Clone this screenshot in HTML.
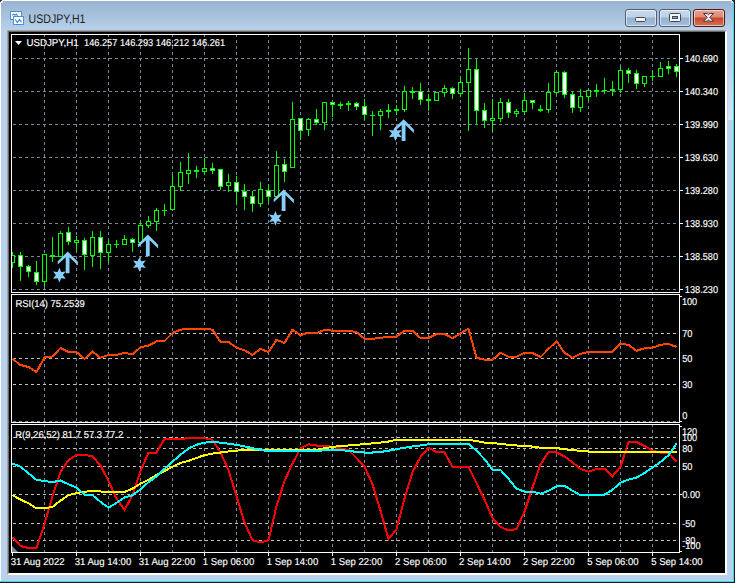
<!DOCTYPE html>
<html><head><meta charset="utf-8">
<style>
html,body{margin:0;padding:0;background:#fff;}
body{width:737px;height:583px;overflow:hidden;position:relative;font-family:"Liberation Sans",sans-serif;}
#win{position:absolute;left:0;top:0;width:735px;height:583px;}
#frame{position:absolute;left:1px;top:1px;width:733px;height:581px;
  background:linear-gradient(#98b4d2 0px,#a9c3df 16px,#b9d1ea 29px,#b9d1ea 100%);
  }
#redge{position:absolute;left:733px;top:3px;width:1px;height:578px;background:#3ad7f5;}
#redge2{position:absolute;left:734px;top:2px;width:1px;height:581px;background:#1a1a1a;}
#bedge{position:absolute;left:0;top:581px;width:734px;height:1px;background:#3ad7f5;}
#bedge2{position:absolute;left:0;top:582px;width:735px;height:1px;background:#1a1a1a;}
#client{position:absolute;left:7px;top:30px;width:720px;height:545px;background:#000;
  box-sizing:border-box;border-style:solid;border-width:2px;border-color:#a0a0a0 #fff #fff #a0a0a0;}
#client2{position:absolute;left:8px;top:31px;width:717px;height:542px;box-sizing:border-box;border-style:solid;border-width:1px 0 0 1px;border-color:#696969;}
#title{position:absolute;left:29px;top:9px;font-size:12px;color:#1e1e1e;letter-spacing:-0.9px;line-height:16px;}
.btn{position:absolute;top:9px;height:18px;box-sizing:border-box;border:1px solid #4f5f74;border-radius:3px;
  background:linear-gradient(#c8daec 0px,#bcd0e6 7px,#97b1cf 8px,#a6bfdb 16px);box-shadow:inset 0 0 0 1px rgba(255,255,255,0.55);}
#bclose{border-color:#4a1a1a;background:linear-gradient(#e9a08c 0px,#dd8a74 7px,#c8452a 8px,#d27258 16px);}
.lb{position:absolute;font-size:10px;line-height:10px;color:#fff;white-space:nowrap;transform:translateY(-5px);letter-spacing:-0.5px;}
.tm{letter-spacing:-0.38px;}
.hd{position:absolute;font-size:10px;line-height:10px;color:#fff;white-space:nowrap;letter-spacing:-0.3px;}
svg{position:absolute;left:0;top:0;}
</style></head><body>
<div id="win">
<div id="frame"></div>
<div id="redge"></div><div id="redge2"></div>
<div id="bedge"></div><div id="bedge2"></div>
<div style="position:absolute;left:0;top:0;width:2px;height:2px;background:#2a2a2a;border-radius:0 0 2px 0"></div>
<div style="position:absolute;left:1px;top:1px;width:2px;height:2px;background:#d8e6f2;"></div>
<div style="position:absolute;left:732px;top:0;width:3px;height:2px;background:#2a2a2a;"></div>
<div style="position:absolute;left:731px;top:1px;width:2px;height:2px;background:#bfe9f7;"></div>
<div style="position:absolute;left:728px;top:60px;width:5px;height:60px;background:linear-gradient(rgba(255,255,255,0),rgba(255,255,255,0.4));"></div>
<div id="client"></div>
<div id="client2"></div>
</div>
<svg width="737" height="583" viewBox="0 0 737 583">
<rect x="9" y="32" width="716" height="541" fill="#000"/>
<line x1="13" y1="58.5" x2="679" y2="58.5" stroke="#778899" stroke-width="1" stroke-dasharray="3 3"/>
<line x1="13" y1="91.5" x2="679" y2="91.5" stroke="#778899" stroke-width="1" stroke-dasharray="3 3"/>
<line x1="13" y1="124.5" x2="679" y2="124.5" stroke="#778899" stroke-width="1" stroke-dasharray="3 3"/>
<line x1="13" y1="157.5" x2="679" y2="157.5" stroke="#778899" stroke-width="1" stroke-dasharray="3 3"/>
<line x1="13" y1="190.5" x2="679" y2="190.5" stroke="#778899" stroke-width="1" stroke-dasharray="3 3"/>
<line x1="13" y1="223.5" x2="679" y2="223.5" stroke="#778899" stroke-width="1" stroke-dasharray="3 3"/>
<line x1="13" y1="256.5" x2="679" y2="256.5" stroke="#778899" stroke-width="1" stroke-dasharray="3 3"/>
<line x1="13" y1="289.5" x2="679" y2="289.5" stroke="#778899" stroke-width="1" stroke-dasharray="3 3"/>
<line x1="44.5" y1="34" x2="44.5" y2="292" stroke="#778899" stroke-width="1" stroke-dasharray="3 3"/>
<line x1="76.5" y1="34" x2="76.5" y2="292" stroke="#778899" stroke-width="1" stroke-dasharray="3 3"/>
<line x1="108.5" y1="34" x2="108.5" y2="292" stroke="#778899" stroke-width="1" stroke-dasharray="3 3"/>
<line x1="140.5" y1="34" x2="140.5" y2="292" stroke="#778899" stroke-width="1" stroke-dasharray="3 3"/>
<line x1="172.5" y1="34" x2="172.5" y2="292" stroke="#778899" stroke-width="1" stroke-dasharray="3 3"/>
<line x1="204.5" y1="34" x2="204.5" y2="292" stroke="#778899" stroke-width="1" stroke-dasharray="3 3"/>
<line x1="236.5" y1="34" x2="236.5" y2="292" stroke="#778899" stroke-width="1" stroke-dasharray="3 3"/>
<line x1="268.5" y1="34" x2="268.5" y2="292" stroke="#778899" stroke-width="1" stroke-dasharray="3 3"/>
<line x1="300.5" y1="34" x2="300.5" y2="292" stroke="#778899" stroke-width="1" stroke-dasharray="3 3"/>
<line x1="332.5" y1="34" x2="332.5" y2="292" stroke="#778899" stroke-width="1" stroke-dasharray="3 3"/>
<line x1="364.5" y1="34" x2="364.5" y2="292" stroke="#778899" stroke-width="1" stroke-dasharray="3 3"/>
<line x1="396.5" y1="34" x2="396.5" y2="292" stroke="#778899" stroke-width="1" stroke-dasharray="3 3"/>
<line x1="428.5" y1="34" x2="428.5" y2="292" stroke="#778899" stroke-width="1" stroke-dasharray="3 3"/>
<line x1="460.5" y1="34" x2="460.5" y2="292" stroke="#778899" stroke-width="1" stroke-dasharray="3 3"/>
<line x1="492.5" y1="34" x2="492.5" y2="292" stroke="#778899" stroke-width="1" stroke-dasharray="3 3"/>
<line x1="524.5" y1="34" x2="524.5" y2="292" stroke="#778899" stroke-width="1" stroke-dasharray="3 3"/>
<line x1="556.5" y1="34" x2="556.5" y2="292" stroke="#778899" stroke-width="1" stroke-dasharray="3 3"/>
<line x1="588.5" y1="34" x2="588.5" y2="292" stroke="#778899" stroke-width="1" stroke-dasharray="3 3"/>
<line x1="620.5" y1="34" x2="620.5" y2="292" stroke="#778899" stroke-width="1" stroke-dasharray="3 3"/>
<line x1="652.5" y1="34" x2="652.5" y2="292" stroke="#778899" stroke-width="1" stroke-dasharray="3 3"/>
<line x1="44.5" y1="292" x2="44.5" y2="422" stroke="#778899" stroke-width="1" stroke-dasharray="3 3"/>
<line x1="76.5" y1="292" x2="76.5" y2="422" stroke="#778899" stroke-width="1" stroke-dasharray="3 3"/>
<line x1="108.5" y1="292" x2="108.5" y2="422" stroke="#778899" stroke-width="1" stroke-dasharray="3 3"/>
<line x1="140.5" y1="292" x2="140.5" y2="422" stroke="#778899" stroke-width="1" stroke-dasharray="3 3"/>
<line x1="172.5" y1="292" x2="172.5" y2="422" stroke="#778899" stroke-width="1" stroke-dasharray="3 3"/>
<line x1="204.5" y1="292" x2="204.5" y2="422" stroke="#778899" stroke-width="1" stroke-dasharray="3 3"/>
<line x1="236.5" y1="292" x2="236.5" y2="422" stroke="#778899" stroke-width="1" stroke-dasharray="3 3"/>
<line x1="268.5" y1="292" x2="268.5" y2="422" stroke="#778899" stroke-width="1" stroke-dasharray="3 3"/>
<line x1="300.5" y1="292" x2="300.5" y2="422" stroke="#778899" stroke-width="1" stroke-dasharray="3 3"/>
<line x1="332.5" y1="292" x2="332.5" y2="422" stroke="#778899" stroke-width="1" stroke-dasharray="3 3"/>
<line x1="364.5" y1="292" x2="364.5" y2="422" stroke="#778899" stroke-width="1" stroke-dasharray="3 3"/>
<line x1="396.5" y1="292" x2="396.5" y2="422" stroke="#778899" stroke-width="1" stroke-dasharray="3 3"/>
<line x1="428.5" y1="292" x2="428.5" y2="422" stroke="#778899" stroke-width="1" stroke-dasharray="3 3"/>
<line x1="460.5" y1="292" x2="460.5" y2="422" stroke="#778899" stroke-width="1" stroke-dasharray="3 3"/>
<line x1="492.5" y1="292" x2="492.5" y2="422" stroke="#778899" stroke-width="1" stroke-dasharray="3 3"/>
<line x1="524.5" y1="292" x2="524.5" y2="422" stroke="#778899" stroke-width="1" stroke-dasharray="3 3"/>
<line x1="556.5" y1="292" x2="556.5" y2="422" stroke="#778899" stroke-width="1" stroke-dasharray="3 3"/>
<line x1="588.5" y1="292" x2="588.5" y2="422" stroke="#778899" stroke-width="1" stroke-dasharray="3 3"/>
<line x1="620.5" y1="292" x2="620.5" y2="422" stroke="#778899" stroke-width="1" stroke-dasharray="3 3"/>
<line x1="652.5" y1="292" x2="652.5" y2="422" stroke="#778899" stroke-width="1" stroke-dasharray="3 3"/>
<line x1="13" y1="421.5" x2="679" y2="421.5" stroke="#778899" stroke-width="1" stroke-dasharray="3 3"/>
<line x1="13" y1="333.5" x2="679" y2="333.5" stroke="#c0c0c0" stroke-width="1" stroke-dasharray="3 3"/>
<line x1="13" y1="358.5" x2="679" y2="358.5" stroke="#c0c0c0" stroke-width="1" stroke-dasharray="3 3"/>
<line x1="13" y1="384.5" x2="679" y2="384.5" stroke="#c0c0c0" stroke-width="1" stroke-dasharray="3 3"/>
<line x1="44.5" y1="424" x2="44.5" y2="552" stroke="#778899" stroke-width="1" stroke-dasharray="3 3"/>
<line x1="76.5" y1="424" x2="76.5" y2="552" stroke="#778899" stroke-width="1" stroke-dasharray="3 3"/>
<line x1="108.5" y1="424" x2="108.5" y2="552" stroke="#778899" stroke-width="1" stroke-dasharray="3 3"/>
<line x1="140.5" y1="424" x2="140.5" y2="552" stroke="#778899" stroke-width="1" stroke-dasharray="3 3"/>
<line x1="172.5" y1="424" x2="172.5" y2="552" stroke="#778899" stroke-width="1" stroke-dasharray="3 3"/>
<line x1="204.5" y1="424" x2="204.5" y2="552" stroke="#778899" stroke-width="1" stroke-dasharray="3 3"/>
<line x1="236.5" y1="424" x2="236.5" y2="552" stroke="#778899" stroke-width="1" stroke-dasharray="3 3"/>
<line x1="268.5" y1="424" x2="268.5" y2="552" stroke="#778899" stroke-width="1" stroke-dasharray="3 3"/>
<line x1="300.5" y1="424" x2="300.5" y2="552" stroke="#778899" stroke-width="1" stroke-dasharray="3 3"/>
<line x1="332.5" y1="424" x2="332.5" y2="552" stroke="#778899" stroke-width="1" stroke-dasharray="3 3"/>
<line x1="364.5" y1="424" x2="364.5" y2="552" stroke="#778899" stroke-width="1" stroke-dasharray="3 3"/>
<line x1="396.5" y1="424" x2="396.5" y2="552" stroke="#778899" stroke-width="1" stroke-dasharray="3 3"/>
<line x1="428.5" y1="424" x2="428.5" y2="552" stroke="#778899" stroke-width="1" stroke-dasharray="3 3"/>
<line x1="460.5" y1="424" x2="460.5" y2="552" stroke="#778899" stroke-width="1" stroke-dasharray="3 3"/>
<line x1="492.5" y1="424" x2="492.5" y2="552" stroke="#778899" stroke-width="1" stroke-dasharray="3 3"/>
<line x1="524.5" y1="424" x2="524.5" y2="552" stroke="#778899" stroke-width="1" stroke-dasharray="3 3"/>
<line x1="556.5" y1="424" x2="556.5" y2="552" stroke="#778899" stroke-width="1" stroke-dasharray="3 3"/>
<line x1="588.5" y1="424" x2="588.5" y2="552" stroke="#778899" stroke-width="1" stroke-dasharray="3 3"/>
<line x1="620.5" y1="424" x2="620.5" y2="552" stroke="#778899" stroke-width="1" stroke-dasharray="3 3"/>
<line x1="652.5" y1="424" x2="652.5" y2="552" stroke="#778899" stroke-width="1" stroke-dasharray="3 3"/>
<line x1="13" y1="437.5" x2="679" y2="437.5" stroke="#c0c0c0" stroke-width="1" stroke-dasharray="3 3"/>
<line x1="13" y1="448.5" x2="679" y2="448.5" stroke="#c0c0c0" stroke-width="1" stroke-dasharray="3 3"/>
<line x1="13" y1="466.5" x2="679" y2="466.5" stroke="#c0c0c0" stroke-width="1" stroke-dasharray="3 3"/>
<line x1="13" y1="494.5" x2="679" y2="494.5" stroke="#c0c0c0" stroke-width="1" stroke-dasharray="3 3"/>
<line x1="13" y1="523.5" x2="679" y2="523.5" stroke="#c0c0c0" stroke-width="1" stroke-dasharray="3 3"/>
<line x1="13" y1="540.5" x2="679" y2="540.5" stroke="#c0c0c0" stroke-width="1" stroke-dasharray="3 3"/>
<rect x="11.5" y="34.5" width="668" height="258" fill="none" stroke="#fff" stroke-width="1"/>
<rect x="11.5" y="294.5" width="668" height="128" fill="none" stroke="#fff" stroke-width="1"/>
<rect x="11.5" y="424.5" width="668" height="128" fill="none" stroke="#fff" stroke-width="1"/>
<defs>
<clipPath id="cp0"><rect x="12" y="35" width="667" height="257"/></clipPath>
<clipPath id="cp1"><rect x="12" y="295" width="667" height="127"/></clipPath>
<clipPath id="cp2"><rect x="12" y="425" width="667" height="127"/></clipPath>
</defs>
<g clip-path="url(#cp0)" shape-rendering="crispEdges">
<rect x="12" y="252" width="1" height="16" fill="#00ff00"/>
<rect x="10" y="255" width="5" height="8" fill="#00ff00"/>
<rect x="11" y="256" width="3" height="6" fill="#000"/>
<rect x="20" y="252" width="1" height="29" fill="#00ff00"/>
<rect x="18" y="255" width="5" height="12" fill="#00ff00"/>
<rect x="19" y="256" width="3" height="10" fill="#fff"/>
<rect x="28" y="265" width="1" height="12" fill="#00ff00"/>
<rect x="26" y="266" width="5" height="6" fill="#00ff00"/>
<rect x="27" y="267" width="3" height="4" fill="#fff"/>
<rect x="36" y="261" width="1" height="24" fill="#00ff00"/>
<rect x="34" y="272" width="5" height="10" fill="#00ff00"/>
<rect x="35" y="273" width="3" height="8" fill="#fff"/>
<rect x="44" y="254" width="1" height="32" fill="#00ff00"/>
<rect x="42" y="254" width="5" height="28" fill="#00ff00"/>
<rect x="43" y="255" width="3" height="26" fill="#000"/>
<rect x="52" y="237" width="1" height="25" fill="#00ff00"/>
<rect x="50" y="255" width="5" height="2" fill="#00ff00"/>
<rect x="60" y="231" width="1" height="26" fill="#00ff00"/>
<rect x="58" y="233" width="5" height="24" fill="#00ff00"/>
<rect x="59" y="234" width="3" height="22" fill="#000"/>
<rect x="68" y="227" width="1" height="18" fill="#00ff00"/>
<rect x="66" y="232" width="5" height="10" fill="#00ff00"/>
<rect x="67" y="233" width="3" height="8" fill="#fff"/>
<rect x="76" y="236" width="1" height="15" fill="#00ff00"/>
<rect x="74" y="240" width="5" height="3" fill="#00ff00"/>
<rect x="75" y="241" width="3" height="1" fill="#000"/>
<rect x="84" y="238" width="1" height="32" fill="#00ff00"/>
<rect x="82" y="240" width="5" height="15" fill="#00ff00"/>
<rect x="83" y="241" width="3" height="13" fill="#fff"/>
<rect x="92" y="231" width="1" height="36" fill="#00ff00"/>
<rect x="90" y="237" width="5" height="19" fill="#00ff00"/>
<rect x="91" y="238" width="3" height="17" fill="#000"/>
<rect x="100" y="231" width="1" height="38" fill="#00ff00"/>
<rect x="98" y="237" width="5" height="16" fill="#00ff00"/>
<rect x="99" y="238" width="3" height="14" fill="#fff"/>
<rect x="108" y="241" width="1" height="21" fill="#00ff00"/>
<rect x="106" y="244" width="5" height="9" fill="#00ff00"/>
<rect x="107" y="245" width="3" height="7" fill="#000"/>
<rect x="116" y="240" width="1" height="8" fill="#00ff00"/>
<rect x="114" y="244" width="5" height="1" fill="#00ff00"/>
<rect x="124" y="235" width="1" height="10" fill="#00ff00"/>
<rect x="122" y="239" width="5" height="6" fill="#00ff00"/>
<rect x="123" y="240" width="3" height="4" fill="#000"/>
<rect x="132" y="238" width="1" height="14" fill="#00ff00"/>
<rect x="130" y="239" width="5" height="4" fill="#00ff00"/>
<rect x="131" y="240" width="3" height="2" fill="#fff"/>
<rect x="140" y="221" width="1" height="22" fill="#00ff00"/>
<rect x="138" y="225" width="5" height="18" fill="#00ff00"/>
<rect x="139" y="226" width="3" height="16" fill="#000"/>
<rect x="148" y="216" width="1" height="12" fill="#00ff00"/>
<rect x="146" y="221" width="5" height="5" fill="#00ff00"/>
<rect x="147" y="222" width="3" height="3" fill="#000"/>
<rect x="156" y="208" width="1" height="23" fill="#00ff00"/>
<rect x="154" y="210" width="5" height="12" fill="#00ff00"/>
<rect x="155" y="211" width="3" height="10" fill="#000"/>
<rect x="164" y="204" width="1" height="12" fill="#00ff00"/>
<rect x="162" y="210" width="5" height="1" fill="#00ff00"/>
<rect x="172" y="175" width="1" height="35" fill="#00ff00"/>
<rect x="170" y="186" width="5" height="24" fill="#00ff00"/>
<rect x="171" y="187" width="3" height="22" fill="#000"/>
<rect x="180" y="162" width="1" height="29" fill="#00ff00"/>
<rect x="178" y="172" width="5" height="15" fill="#00ff00"/>
<rect x="179" y="173" width="3" height="13" fill="#000"/>
<rect x="188" y="153" width="1" height="31" fill="#00ff00"/>
<rect x="186" y="170" width="5" height="4" fill="#00ff00"/>
<rect x="187" y="171" width="3" height="2" fill="#000"/>
<rect x="196" y="166" width="1" height="12" fill="#00ff00"/>
<rect x="194" y="170" width="5" height="2" fill="#00ff00"/>
<rect x="204" y="158" width="1" height="17" fill="#00ff00"/>
<rect x="202" y="168" width="5" height="4" fill="#00ff00"/>
<rect x="203" y="169" width="3" height="2" fill="#000"/>
<rect x="212" y="163" width="1" height="11" fill="#00ff00"/>
<rect x="210" y="168" width="5" height="3" fill="#00ff00"/>
<rect x="211" y="169" width="3" height="1" fill="#fff"/>
<rect x="220" y="169" width="1" height="21" fill="#00ff00"/>
<rect x="218" y="169" width="5" height="18" fill="#00ff00"/>
<rect x="219" y="170" width="3" height="16" fill="#fff"/>
<rect x="228" y="174" width="1" height="18" fill="#00ff00"/>
<rect x="226" y="182" width="5" height="4" fill="#00ff00"/>
<rect x="227" y="183" width="3" height="2" fill="#000"/>
<rect x="236" y="176" width="1" height="29" fill="#00ff00"/>
<rect x="234" y="182" width="5" height="10" fill="#00ff00"/>
<rect x="235" y="183" width="3" height="8" fill="#fff"/>
<rect x="244" y="184" width="1" height="26" fill="#00ff00"/>
<rect x="242" y="191" width="5" height="6" fill="#00ff00"/>
<rect x="243" y="192" width="3" height="4" fill="#fff"/>
<rect x="252" y="191" width="1" height="21" fill="#00ff00"/>
<rect x="250" y="196" width="5" height="8" fill="#00ff00"/>
<rect x="251" y="197" width="3" height="6" fill="#fff"/>
<rect x="260" y="182" width="1" height="25" fill="#00ff00"/>
<rect x="258" y="189" width="5" height="15" fill="#00ff00"/>
<rect x="259" y="190" width="3" height="13" fill="#000"/>
<rect x="268" y="184" width="1" height="19" fill="#00ff00"/>
<rect x="266" y="190" width="5" height="7" fill="#00ff00"/>
<rect x="267" y="191" width="3" height="5" fill="#fff"/>
<rect x="276" y="151" width="1" height="46" fill="#00ff00"/>
<rect x="274" y="165" width="5" height="32" fill="#00ff00"/>
<rect x="275" y="166" width="3" height="30" fill="#000"/>
<rect x="284" y="159" width="1" height="23" fill="#00ff00"/>
<rect x="282" y="164" width="5" height="8" fill="#00ff00"/>
<rect x="283" y="165" width="3" height="6" fill="#fff"/>
<rect x="292" y="102" width="1" height="66" fill="#00ff00"/>
<rect x="290" y="119" width="5" height="49" fill="#00ff00"/>
<rect x="291" y="120" width="3" height="47" fill="#000"/>
<rect x="300" y="118" width="1" height="22" fill="#00ff00"/>
<rect x="298" y="118" width="5" height="13" fill="#00ff00"/>
<rect x="299" y="119" width="3" height="11" fill="#fff"/>
<rect x="308" y="118" width="1" height="18" fill="#00ff00"/>
<rect x="306" y="119" width="5" height="11" fill="#00ff00"/>
<rect x="307" y="120" width="3" height="9" fill="#000"/>
<rect x="316" y="109" width="1" height="16" fill="#00ff00"/>
<rect x="314" y="119" width="5" height="4" fill="#00ff00"/>
<rect x="315" y="120" width="3" height="2" fill="#fff"/>
<rect x="324" y="102" width="1" height="28" fill="#00ff00"/>
<rect x="322" y="102" width="5" height="21" fill="#00ff00"/>
<rect x="323" y="103" width="3" height="19" fill="#000"/>
<rect x="332" y="102" width="1" height="15" fill="#00ff00"/>
<rect x="330" y="102" width="5" height="3" fill="#00ff00"/>
<rect x="331" y="103" width="3" height="1" fill="#fff"/>
<rect x="340" y="102" width="1" height="7" fill="#00ff00"/>
<rect x="338" y="104" width="5" height="2" fill="#00ff00"/>
<rect x="348" y="101" width="1" height="10" fill="#00ff00"/>
<rect x="346" y="103" width="5" height="2" fill="#00ff00"/>
<rect x="356" y="102" width="1" height="8" fill="#00ff00"/>
<rect x="354" y="103" width="5" height="4" fill="#00ff00"/>
<rect x="355" y="104" width="3" height="2" fill="#fff"/>
<rect x="364" y="99" width="1" height="21" fill="#00ff00"/>
<rect x="362" y="106" width="5" height="9" fill="#00ff00"/>
<rect x="363" y="107" width="3" height="7" fill="#fff"/>
<rect x="372" y="111" width="1" height="25" fill="#00ff00"/>
<rect x="370" y="115" width="5" height="1" fill="#00ff00"/>
<rect x="380" y="109" width="1" height="21" fill="#00ff00"/>
<rect x="378" y="111" width="5" height="5" fill="#00ff00"/>
<rect x="379" y="112" width="3" height="3" fill="#000"/>
<rect x="388" y="104" width="1" height="14" fill="#00ff00"/>
<rect x="386" y="110" width="5" height="2" fill="#00ff00"/>
<rect x="396" y="105" width="1" height="10" fill="#00ff00"/>
<rect x="394" y="109" width="5" height="2" fill="#00ff00"/>
<rect x="404" y="86" width="1" height="26" fill="#00ff00"/>
<rect x="402" y="91" width="5" height="19" fill="#00ff00"/>
<rect x="403" y="92" width="3" height="17" fill="#000"/>
<rect x="412" y="87" width="1" height="12" fill="#00ff00"/>
<rect x="410" y="91" width="5" height="2" fill="#00ff00"/>
<rect x="420" y="83" width="1" height="22" fill="#00ff00"/>
<rect x="418" y="91" width="5" height="9" fill="#00ff00"/>
<rect x="419" y="92" width="3" height="7" fill="#fff"/>
<rect x="428" y="94" width="1" height="17" fill="#00ff00"/>
<rect x="426" y="99" width="5" height="2" fill="#00ff00"/>
<rect x="436" y="92" width="1" height="9" fill="#00ff00"/>
<rect x="434" y="92" width="5" height="9" fill="#00ff00"/>
<rect x="435" y="93" width="3" height="7" fill="#000"/>
<rect x="444" y="85" width="1" height="12" fill="#00ff00"/>
<rect x="442" y="88" width="5" height="5" fill="#00ff00"/>
<rect x="443" y="89" width="3" height="3" fill="#000"/>
<rect x="452" y="87" width="1" height="12" fill="#00ff00"/>
<rect x="450" y="88" width="5" height="6" fill="#00ff00"/>
<rect x="451" y="89" width="3" height="4" fill="#fff"/>
<rect x="460" y="77" width="1" height="20" fill="#00ff00"/>
<rect x="458" y="82" width="5" height="12" fill="#00ff00"/>
<rect x="459" y="83" width="3" height="10" fill="#000"/>
<rect x="468" y="48" width="1" height="83" fill="#00ff00"/>
<rect x="466" y="69" width="5" height="14" fill="#00ff00"/>
<rect x="467" y="70" width="3" height="12" fill="#000"/>
<rect x="476" y="59" width="1" height="66" fill="#00ff00"/>
<rect x="474" y="69" width="5" height="42" fill="#00ff00"/>
<rect x="475" y="70" width="3" height="40" fill="#fff"/>
<rect x="484" y="103" width="1" height="25" fill="#00ff00"/>
<rect x="482" y="110" width="5" height="11" fill="#00ff00"/>
<rect x="483" y="111" width="3" height="9" fill="#fff"/>
<rect x="492" y="99" width="1" height="33" fill="#00ff00"/>
<rect x="490" y="118" width="5" height="3" fill="#00ff00"/>
<rect x="491" y="119" width="3" height="1" fill="#000"/>
<rect x="500" y="98" width="1" height="24" fill="#00ff00"/>
<rect x="498" y="102" width="5" height="17" fill="#00ff00"/>
<rect x="499" y="103" width="3" height="15" fill="#000"/>
<rect x="508" y="99" width="1" height="19" fill="#00ff00"/>
<rect x="506" y="102" width="5" height="11" fill="#00ff00"/>
<rect x="507" y="103" width="3" height="9" fill="#fff"/>
<rect x="516" y="109" width="1" height="8" fill="#00ff00"/>
<rect x="514" y="111" width="5" height="3" fill="#00ff00"/>
<rect x="515" y="112" width="3" height="1" fill="#000"/>
<rect x="524" y="93" width="1" height="22" fill="#00ff00"/>
<rect x="522" y="100" width="5" height="12" fill="#00ff00"/>
<rect x="523" y="101" width="3" height="10" fill="#000"/>
<rect x="532" y="100" width="1" height="9" fill="#00ff00"/>
<rect x="530" y="100" width="5" height="3" fill="#00ff00"/>
<rect x="531" y="101" width="3" height="1" fill="#fff"/>
<rect x="540" y="105" width="1" height="7" fill="#00ff00"/>
<rect x="538" y="109" width="5" height="2" fill="#00ff00"/>
<rect x="548" y="83" width="1" height="30" fill="#00ff00"/>
<rect x="546" y="92" width="5" height="18" fill="#00ff00"/>
<rect x="547" y="93" width="3" height="16" fill="#000"/>
<rect x="556" y="71" width="1" height="23" fill="#00ff00"/>
<rect x="554" y="72" width="5" height="21" fill="#00ff00"/>
<rect x="555" y="73" width="3" height="19" fill="#000"/>
<rect x="564" y="71" width="1" height="27" fill="#00ff00"/>
<rect x="562" y="72" width="5" height="23" fill="#00ff00"/>
<rect x="563" y="73" width="3" height="21" fill="#fff"/>
<rect x="572" y="92" width="1" height="21" fill="#00ff00"/>
<rect x="570" y="94" width="5" height="14" fill="#00ff00"/>
<rect x="571" y="95" width="3" height="12" fill="#fff"/>
<rect x="580" y="89" width="1" height="23" fill="#00ff00"/>
<rect x="578" y="96" width="5" height="12" fill="#00ff00"/>
<rect x="579" y="97" width="3" height="10" fill="#000"/>
<rect x="588" y="90" width="1" height="11" fill="#00ff00"/>
<rect x="586" y="90" width="5" height="7" fill="#00ff00"/>
<rect x="587" y="91" width="3" height="5" fill="#000"/>
<rect x="596" y="84" width="1" height="13" fill="#00ff00"/>
<rect x="594" y="90" width="5" height="2" fill="#00ff00"/>
<rect x="604" y="78" width="1" height="16" fill="#00ff00"/>
<rect x="602" y="90" width="5" height="1" fill="#00ff00"/>
<rect x="612" y="81" width="1" height="15" fill="#00ff00"/>
<rect x="610" y="89" width="5" height="2" fill="#00ff00"/>
<rect x="620" y="67" width="1" height="26" fill="#00ff00"/>
<rect x="618" y="70" width="5" height="20" fill="#00ff00"/>
<rect x="619" y="71" width="3" height="18" fill="#000"/>
<rect x="628" y="68" width="1" height="15" fill="#00ff00"/>
<rect x="626" y="70" width="5" height="4" fill="#00ff00"/>
<rect x="627" y="71" width="3" height="2" fill="#fff"/>
<rect x="636" y="70" width="1" height="19" fill="#00ff00"/>
<rect x="634" y="73" width="5" height="11" fill="#00ff00"/>
<rect x="635" y="74" width="3" height="9" fill="#fff"/>
<rect x="644" y="76" width="1" height="11" fill="#00ff00"/>
<rect x="642" y="76" width="5" height="8" fill="#00ff00"/>
<rect x="643" y="77" width="3" height="6" fill="#000"/>
<rect x="652" y="71" width="1" height="10" fill="#00ff00"/>
<rect x="650" y="76" width="5" height="1" fill="#00ff00"/>
<rect x="660" y="62" width="1" height="15" fill="#00ff00"/>
<rect x="658" y="68" width="5" height="9" fill="#00ff00"/>
<rect x="659" y="69" width="3" height="7" fill="#000"/>
<rect x="668" y="61" width="1" height="13" fill="#00ff00"/>
<rect x="666" y="66" width="5" height="3" fill="#00ff00"/>
<rect x="667" y="67" width="3" height="1" fill="#fff"/>
<rect x="676" y="64" width="1" height="13" fill="#00ff00"/>
<rect x="674" y="66" width="5" height="6" fill="#00ff00"/>
<rect x="675" y="67" width="3" height="4" fill="#fff"/>
</g>
<g clip-path="url(#cp0)">
<polygon points="67.7,251.6 57.7,261.2 57.7,264.4 65.7,257.2 65.7,273.2 69.5,273.2 69.5,257.3 77.9,265.4 77.9,261.8" fill="#87cefa"/>
<polygon points="147.9,234.6 137.9,244.2 137.9,247.4 145.9,240.2 145.9,256.2 149.7,256.2 149.7,240.3 158.1,248.4 158.1,244.8" fill="#87cefa"/>
<polygon points="283.7,189.4 273.7,199.0 273.7,202.2 281.7,195.0 281.7,211.0 285.5,211.0 285.5,195.1 293.9,203.2 293.9,199.6" fill="#87cefa"/>
<polygon points="403.7,119.3 393.7,128.9 393.7,132.1 401.7,124.9 401.7,140.9 405.5,140.9 405.5,125.0 413.9,133.1 413.9,129.5" fill="#87cefa"/>
<polygon points="59.40,267.70 61.15,272.07 65.81,271.40 62.90,275.10 65.81,278.80 61.15,278.13 59.40,282.50 57.65,278.13 52.99,278.80 55.90,275.10 52.99,271.40 57.65,272.07" fill="#87cefa"/>
<polygon points="139.40,256.90 141.15,261.27 145.81,260.60 142.90,264.30 145.81,268.00 141.15,267.33 139.40,271.70 137.65,267.33 132.99,268.00 135.90,264.30 132.99,260.60 137.65,261.27" fill="#87cefa"/>
<polygon points="275.40,210.90 277.15,215.27 281.81,214.60 278.90,218.30 281.81,222.00 277.15,221.33 275.40,225.70 273.65,221.33 268.99,222.00 271.90,218.30 268.99,214.60 273.65,215.27" fill="#87cefa"/>
<polygon points="395.40,126.20 397.15,130.57 401.81,129.90 398.90,133.60 401.81,137.30 397.15,136.63 395.40,141.00 393.65,136.63 388.99,137.30 391.90,133.60 388.99,129.90 393.65,130.57" fill="#87cefa"/>
</g>
<polyline clip-path="url(#cp1)" points="12.5,359.0 20.5,365.0 28.5,367.0 36.5,372.0 44.5,357.5 52.5,356.5 60.5,348.0 68.5,352.0 76.5,352.0 84.5,359.0 92.5,351.6 100.5,357.8 108.5,354.9 116.5,354.9 124.5,353.0 132.5,354.1 140.5,347.3 148.5,345.6 156.5,341.3 164.5,341.0 172.5,333.0 180.5,329.7 188.5,328.9 196.5,328.9 204.5,328.9 212.5,329.7 220.5,341.9 228.5,341.9 236.5,347.6 244.5,350.3 252.5,355.0 260.5,348.9 268.5,352.1 276.5,339.8 284.5,343.0 292.5,329.7 300.5,335.1 308.5,332.6 316.5,333.0 324.5,330.0 332.5,330.6 340.5,330.6 348.5,330.8 356.5,332.0 364.5,338.8 372.5,338.8 380.5,338.0 388.5,336.6 396.5,336.6 404.5,330.6 412.5,330.6 420.5,338.0 428.5,338.0 436.5,333.9 444.5,333.9 452.5,338.2 460.5,333.3 468.5,328.7 476.5,357.8 484.5,359.7 492.5,359.7 500.5,352.7 508.5,356.7 516.5,356.7 524.5,352.7 532.5,353.0 540.5,357.0 548.5,348.9 556.5,341.3 564.5,352.7 572.5,357.8 580.5,353.8 588.5,351.9 596.5,351.9 604.5,351.9 612.5,351.9 620.5,343.7 628.5,344.9 636.5,350.8 644.5,348.3 652.5,347.8 660.5,344.8 668.5,344.0 676.5,346.9" fill="none" stroke="#ff4500" stroke-width="2" stroke-linejoin="miter" shape-rendering="crispEdges"/>
<polyline clip-path="url(#cp2)" points="12.5,537.0 20.5,546.0 28.5,548.0 36.5,548.0 44.5,523.7 52.5,496.3 60.5,472.2 68.5,460.2 76.5,454.7 84.5,454.7 92.5,456.4 100.5,465.6 108.5,481.0 116.5,498.5 124.5,509.9 132.5,495.2 140.5,471.1 148.5,452.5 156.5,452.5 164.5,438.9 172.5,438.9 180.5,438.9 188.5,438.2 196.5,438.2 204.5,438.2 212.5,439.8 220.5,452.5 228.5,470.0 236.5,496.3 244.5,522.6 252.5,540.2 260.5,542.4 268.5,540.2 276.5,506.2 284.5,481.0 292.5,463.5 300.5,448.5 308.5,444.2 316.5,445.5 324.5,445.5 332.5,447.0 340.5,448.5 348.5,449.9 356.5,458.0 364.5,466.7 372.5,484.3 380.5,510.6 388.5,539.1 396.5,529.2 404.5,498.5 412.5,472.2 420.5,456.9 428.5,447.7 436.5,452.0 444.5,452.5 452.5,466.7 460.5,466.7 468.5,466.7 476.5,483.2 484.5,499.6 492.5,518.2 500.5,527.0 508.5,530.3 516.5,529.2 524.5,511.7 532.5,487.6 540.5,464.5 548.5,452.0 556.5,452.5 564.5,456.4 572.5,462.4 580.5,468.9 588.5,471.8 596.5,468.9 604.5,468.9 612.5,476.2 620.5,466.7 628.5,442.0 636.5,442.0 644.5,445.9 652.5,450.7 660.5,452.6 668.5,452.6 676.5,462.0" fill="none" stroke="#ff0000" stroke-width="2" stroke-linejoin="miter" shape-rendering="crispEdges"/>
<polyline clip-path="url(#cp2)" points="12.5,495.2 20.5,499.6 28.5,503.3 36.5,508.4 44.5,508.4 52.5,506.8 60.5,500.7 68.5,495.2 76.5,493.0 84.5,491.9 92.5,490.8 100.5,491.5 108.5,491.9 116.5,491.9 124.5,491.9 132.5,488.7 140.5,483.6 148.5,479.9 156.5,474.8 164.5,471.1 172.5,466.7 180.5,463.0 188.5,460.8 196.5,458.0 204.5,455.1 212.5,453.6 220.5,452.5 228.5,451.4 236.5,450.7 244.5,449.9 252.5,449.9 260.5,449.9 268.5,449.9 276.5,449.9 284.5,449.9 292.5,449.9 300.5,449.9 308.5,449.9 316.5,449.9 324.5,448.1 332.5,447.0 340.5,445.9 348.5,445.5 356.5,444.8 364.5,444.2 372.5,443.3 380.5,442.6 388.5,441.5 396.5,439.8 404.5,439.8 412.5,439.8 420.5,439.8 428.5,439.8 436.5,439.8 444.5,439.8 452.5,439.8 460.5,439.8 468.5,439.8 476.5,441.1 484.5,442.6 492.5,443.3 500.5,443.7 508.5,444.8 516.5,445.5 524.5,445.9 532.5,446.6 540.5,447.7 548.5,447.7 556.5,448.1 564.5,449.2 572.5,450.3 580.5,450.7 588.5,451.5 596.5,451.5 604.5,451.5 612.5,451.5 620.5,451.5 628.5,451.5 636.5,451.5 644.5,451.5 652.5,451.5 660.5,451.5 668.5,451.5 676.5,451.5" fill="none" stroke="#ffff00" stroke-width="2" stroke-linejoin="miter" shape-rendering="crispEdges"/>
<polyline clip-path="url(#cp2)" points="12.5,463.5 20.5,466.7 28.5,473.3 36.5,479.9 44.5,481.0 52.5,482.1 60.5,480.5 68.5,484.3 76.5,487.6 84.5,494.6 92.5,495.2 100.5,501.8 108.5,507.7 116.5,502.9 124.5,497.4 132.5,495.2 140.5,489.3 148.5,482.1 156.5,476.6 164.5,468.9 172.5,461.7 180.5,454.7 188.5,448.5 196.5,444.8 204.5,442.6 212.5,442.0 220.5,442.6 228.5,443.7 236.5,444.8 244.5,446.4 252.5,448.1 260.5,449.9 268.5,451.4 276.5,451.4 284.5,451.4 292.5,451.4 300.5,451.4 308.5,451.4 316.5,451.0 324.5,450.3 332.5,450.3 340.5,450.3 348.5,450.7 356.5,452.0 364.5,452.5 372.5,452.5 380.5,452.0 388.5,450.7 396.5,449.2 404.5,447.7 412.5,446.4 420.5,445.5 428.5,444.2 436.5,443.7 444.5,443.7 452.5,443.7 460.5,443.7 468.5,443.7 476.5,450.7 484.5,459.1 492.5,469.6 500.5,470.0 508.5,478.8 516.5,488.7 524.5,491.5 532.5,491.5 540.5,493.7 548.5,490.8 556.5,486.5 564.5,485.8 572.5,490.8 580.5,495.2 588.5,495.2 596.5,494.6 604.5,494.6 612.5,489.8 620.5,482.7 628.5,479.6 636.5,477.5 644.5,473.0 652.5,467.6 660.5,462.0 668.5,455.3 676.5,443.5" fill="none" stroke="#00ffff" stroke-width="2" stroke-linejoin="miter" shape-rendering="crispEdges"/>
<polygon points="12,546 12,552 18,552" fill="#778899"/>
<rect x="680" y="58" width="3" height="1" fill="#fff"/>
<rect x="680" y="91" width="3" height="1" fill="#fff"/>
<rect x="680" y="124" width="3" height="1" fill="#fff"/>
<rect x="680" y="157" width="3" height="1" fill="#fff"/>
<rect x="680" y="190" width="3" height="1" fill="#fff"/>
<rect x="680" y="223" width="3" height="1" fill="#fff"/>
<rect x="680" y="256" width="3" height="1" fill="#fff"/>
<rect x="680" y="289" width="3" height="1" fill="#fff"/>
<rect x="680" y="296" width="2" height="1" fill="#fff"/>
<rect x="680" y="421" width="2" height="1" fill="#fff"/>
<rect x="680" y="426" width="2" height="1" fill="#fff"/>
<rect x="680" y="494" width="2" height="1" fill="#fff"/>
<rect x="680" y="551" width="2" height="1" fill="#fff"/>
<rect x="12" y="553" width="1" height="3" fill="#fff"/>
<rect x="76" y="553" width="1" height="3" fill="#fff"/>
<rect x="140" y="553" width="1" height="3" fill="#fff"/>
<rect x="204" y="553" width="1" height="3" fill="#fff"/>
<rect x="268" y="553" width="1" height="3" fill="#fff"/>
<rect x="332" y="553" width="1" height="3" fill="#fff"/>
<rect x="396" y="553" width="1" height="3" fill="#fff"/>
<rect x="460" y="553" width="1" height="3" fill="#fff"/>
<rect x="524" y="553" width="1" height="3" fill="#fff"/>
<rect x="588" y="553" width="1" height="3" fill="#fff"/>
<rect x="652" y="553" width="1" height="3" fill="#fff"/>
</svg>
<!-- title icon -->
<svg width="737" height="583" viewBox="0 0 737 583" style="pointer-events:none">
<g shape-rendering="crispEdges">
<rect x="10" y="11" width="12" height="9" fill="#4f8ff0"/>
<rect x="11" y="12" width="10" height="7" fill="#fffef6"/>
<rect x="13" y="16" width="11" height="9" fill="#4f8ff0"/>
<rect x="14" y="17" width="9" height="7" fill="#fffef6"/>
</g>
<g shape-rendering="crispEdges" fill="#3d9a5a">
<rect x="12" y="11" width="1" height="1"/><rect x="15" y="11" width="1" height="1"/><rect x="18" y="11" width="1" height="1"/>
<rect x="15" y="16" width="1" height="1"/><rect x="18" y="16" width="1" height="1"/><rect x="21" y="16" width="1" height="1"/>
<rect x="10" y="14" width="1" height="1"/><rect x="21" y="13" width="1" height="1"/><rect x="13" y="20" width="1" height="1"/><rect x="23" y="19" width="1" height="1"/>
<rect x="16" y="24" width="1" height="1"/><rect x="19" y="24" width="1" height="1"/><rect x="12" y="19" width="1" height="1"/>
</g>
<polyline points="15.3,19.5 17.3,22.5 19.5,19.5 21.5,22.3" fill="none" stroke="#3a7fe8" stroke-width="1.1"/>
<polyline points="12.2,15.4 13.6,14.2 15,15.2 16.3,14.3 17.7,15.7" fill="none" stroke="#3a7fe8" stroke-width="1.1"/>
<!-- buttons glyphs -->
</svg>
<div class="btn" style="left:625px;width:32px;"></div>
<div class="btn" style="left:659px;width:32px;"></div>
<div class="btn" id="bclose" style="left:693px;width:32px;"></div>
<svg width="737" height="583" viewBox="0 0 737 583">
<rect x="635.5" y="17.5" width="10" height="4" rx="1.2" fill="#f4f4f4" stroke="#3c4656" stroke-width="1"/>
<rect x="669.5" y="13.5" width="11" height="8" rx="1" fill="#f4f4f4" stroke="#3c4656" stroke-width="1"/>
<rect x="672.5" y="16.5" width="5" height="2" fill="#8fa8c6" stroke="#3c4656" stroke-width="1"/>
<polygon points="703.5,13.5 707.1,13.5 708.5,14.8 709.9,13.5 713.5,13.5 709.7,17.35 713.5,21.2 709.9,21.2 708.5,19.9 707.1,21.2 703.5,21.2 707.3,17.35" fill="#f7f7f7" stroke="#3a3440" stroke-width="1.0" stroke-linejoin="round"/>
<polygon points="15,41 22,41 18.5,45" fill="#fff"/>
</svg>
<svg width="737" height="583" viewBox="0 0 737 583" style="font-family:'Liberation Sans',sans-serif;text-rendering:geometricPrecision">
<text x="28.60" y="23" font-size="12.5" fill="#1e1e1e" textLength="56.90" lengthAdjust="spacingAndGlyphs">USDJPY,H1</text>
<text transform="matrix(1 0 0 1.0 0 0.000)" x="684.80" y="62" font-size="10" fill="#fff" stroke="#fff" stroke-width="0.15" textLength="33.26" lengthAdjust="spacingAndGlyphs" >140.690</text>
<text transform="matrix(1 0 0 1.0 0 0.000)" x="684.80" y="95" font-size="10" fill="#fff" stroke="#fff" stroke-width="0.15" textLength="33.26" lengthAdjust="spacingAndGlyphs" >140.340</text>
<text transform="matrix(1 0 0 1.0 0 0.000)" x="684.80" y="128" font-size="10" fill="#fff" stroke="#fff" stroke-width="0.15" textLength="33.26" lengthAdjust="spacingAndGlyphs" >139.990</text>
<text transform="matrix(1 0 0 1.0 0 0.000)" x="684.80" y="161" font-size="10" fill="#fff" stroke="#fff" stroke-width="0.15" textLength="33.26" lengthAdjust="spacingAndGlyphs" >139.630</text>
<text transform="matrix(1 0 0 1.0 0 0.000)" x="684.80" y="194" font-size="10" fill="#fff" stroke="#fff" stroke-width="0.15" textLength="33.26" lengthAdjust="spacingAndGlyphs" >139.280</text>
<text transform="matrix(1 0 0 1.0 0 0.000)" x="684.80" y="227" font-size="10" fill="#fff" stroke="#fff" stroke-width="0.15" textLength="33.26" lengthAdjust="spacingAndGlyphs" >138.930</text>
<text transform="matrix(1 0 0 1.0 0 0.000)" x="684.80" y="260" font-size="10" fill="#fff" stroke="#fff" stroke-width="0.15" textLength="33.26" lengthAdjust="spacingAndGlyphs" >138.580</text>
<text transform="matrix(1 0 0 1.0 0 0.000)" x="684.80" y="293" font-size="10" fill="#fff" stroke="#fff" stroke-width="0.15" textLength="33.26" lengthAdjust="spacingAndGlyphs" >138.230</text>
<text transform="matrix(1 0 0 1.0 0 0.000)" x="681.90" y="305" font-size="10" fill="#fff" stroke="#fff" stroke-width="0.15" textLength="15.35" lengthAdjust="spacingAndGlyphs" >100</text>
<text transform="matrix(1 0 0 1.0 0 0.000)" x="682.13" y="337" font-size="10" fill="#fff" stroke="#fff" stroke-width="0.15" textLength="10.23" lengthAdjust="spacingAndGlyphs" >70</text>
<text transform="matrix(1 0 0 1.0 0 0.000)" x="682.23" y="362" font-size="10" fill="#fff" stroke="#fff" stroke-width="0.15" textLength="10.23" lengthAdjust="spacingAndGlyphs" >50</text>
<text transform="matrix(1 0 0 1.0 0 0.000)" x="682.25" y="388" font-size="10" fill="#fff" stroke="#fff" stroke-width="0.15" textLength="10.23" lengthAdjust="spacingAndGlyphs" >30</text>
<text transform="matrix(1 0 0 1.0 0 0.000)" x="682.24" y="419" font-size="10" fill="#fff" stroke="#fff" stroke-width="0.15" textLength="5.12" lengthAdjust="spacingAndGlyphs" >0</text>
<text transform="matrix(1 0 0 1.0 0 0.000)" x="681.90" y="435" font-size="10" fill="#fff" stroke="#fff" stroke-width="0.15" textLength="15.35" lengthAdjust="spacingAndGlyphs" >120</text>
<text transform="matrix(1 0 0 1.0 0 0.000)" x="681.90" y="441" font-size="10" fill="#fff" stroke="#fff" stroke-width="0.15" textLength="15.35" lengthAdjust="spacingAndGlyphs" >100</text>
<text transform="matrix(1 0 0 1.0 0 0.000)" x="682.20" y="452" font-size="10" fill="#fff" stroke="#fff" stroke-width="0.15" textLength="10.23" lengthAdjust="spacingAndGlyphs" >80</text>
<text transform="matrix(1 0 0 1.0 0 0.000)" x="682.23" y="470" font-size="10" fill="#fff" stroke="#fff" stroke-width="0.15" textLength="10.23" lengthAdjust="spacingAndGlyphs" >50</text>
<text transform="matrix(1 0 0 1.0 0 0.000)" x="682.24" y="498" font-size="10" fill="#fff" stroke="#fff" stroke-width="0.15" textLength="17.91" lengthAdjust="spacingAndGlyphs" >0.00</text>
<text transform="matrix(1 0 0 1.0 0 0.000)" x="682.19" y="527" font-size="10" fill="#fff" stroke="#fff" stroke-width="0.15" textLength="13.30" lengthAdjust="spacingAndGlyphs" >-50</text>
<text transform="matrix(1 0 0 1.0 0 0.000)" x="682.19" y="544" font-size="10" fill="#fff" stroke="#fff" stroke-width="0.15" textLength="13.30" lengthAdjust="spacingAndGlyphs" >-80</text>
<text transform="matrix(1 0 0 1.0 0 0.000)" x="682.19" y="549" font-size="10" fill="#fff" stroke="#fff" stroke-width="0.15" textLength="18.42" lengthAdjust="spacingAndGlyphs" >-100</text>
<text transform="matrix(1 0 0 1.0 0 0.000)" x="10.64" y="565" font-size="10" fill="#fff" stroke="#fff" stroke-width="0.15" textLength="53.99" lengthAdjust="spacingAndGlyphs" >31 Aug 2022</text>
<text transform="matrix(1 0 0 1.0 0 0.000)" x="74.64" y="565" font-size="10" fill="#fff" stroke="#fff" stroke-width="0.15" textLength="56.63" lengthAdjust="spacingAndGlyphs" >31 Aug 14:00</text>
<text transform="matrix(1 0 0 1.0 0 0.000)" x="138.64" y="565" font-size="10" fill="#fff" stroke="#fff" stroke-width="0.15" textLength="56.63" lengthAdjust="spacingAndGlyphs" >31 Aug 22:00</text>
<text transform="matrix(1 0 0 1.0 0 0.000)" x="202.87" y="565" font-size="10" fill="#fff" stroke="#fff" stroke-width="0.15" textLength="51.34" lengthAdjust="spacingAndGlyphs" >1 Sep 06:00</text>
<text transform="matrix(1 0 0 1.0 0 0.000)" x="266.87" y="565" font-size="10" fill="#fff" stroke="#fff" stroke-width="0.15" textLength="51.34" lengthAdjust="spacingAndGlyphs" >1 Sep 14:00</text>
<text transform="matrix(1 0 0 1.0 0 0.000)" x="330.87" y="565" font-size="10" fill="#fff" stroke="#fff" stroke-width="0.15" textLength="51.34" lengthAdjust="spacingAndGlyphs" >1 Sep 22:00</text>
<text transform="matrix(1 0 0 1.0 0 0.000)" x="395.12" y="565" font-size="10" fill="#fff" stroke="#fff" stroke-width="0.15" textLength="51.34" lengthAdjust="spacingAndGlyphs" >2 Sep 06:00</text>
<text transform="matrix(1 0 0 1.0 0 0.000)" x="459.12" y="565" font-size="10" fill="#fff" stroke="#fff" stroke-width="0.15" textLength="51.34" lengthAdjust="spacingAndGlyphs" >2 Sep 14:00</text>
<text transform="matrix(1 0 0 1.0 0 0.000)" x="523.12" y="565" font-size="10" fill="#fff" stroke="#fff" stroke-width="0.15" textLength="51.34" lengthAdjust="spacingAndGlyphs" >2 Sep 22:00</text>
<text transform="matrix(1 0 0 1.0 0 0.000)" x="587.22" y="565" font-size="10" fill="#fff" stroke="#fff" stroke-width="0.15" textLength="51.34" lengthAdjust="spacingAndGlyphs" >5 Sep 06:00</text>
<text transform="matrix(1 0 0 1.0 0 0.000)" x="651.22" y="565" font-size="10" fill="#fff" stroke="#fff" stroke-width="0.15" textLength="51.34" lengthAdjust="spacingAndGlyphs" >5 Sep 14:00</text>
<text transform="matrix(1 0 0 1.0 0 0.000)" x="26.47" y="46" font-size="10" fill="#fff" stroke="#fff" stroke-width="0.15" textLength="52.20" lengthAdjust="spacingAndGlyphs" >USDJPY,H1</text>
<text transform="matrix(1 0 0 1.0 0 0.000)" x="84.00" y="46" font-size="10" fill="#fff" stroke="#fff" stroke-width="0.15" textLength="141.05" lengthAdjust="spacingAndGlyphs" >146.257 146.293 146.212 146.261</text>
<text transform="matrix(1 0 0 1.0 0 0.000)" x="15.53" y="307" font-size="10" fill="#fff" stroke="#fff" stroke-width="0.15" textLength="69.12" lengthAdjust="spacingAndGlyphs" >RSI(14) 75.2539</text>
<text transform="matrix(1 0 0 1.0 0 0.000)" x="15.22" y="438" font-size="10" fill="#fff" stroke="#fff" stroke-width="0.15" textLength="107.95" lengthAdjust="spacingAndGlyphs" >R(9,26,52) 81.7 57.3 77.2</text>
</svg>
</body></html>
